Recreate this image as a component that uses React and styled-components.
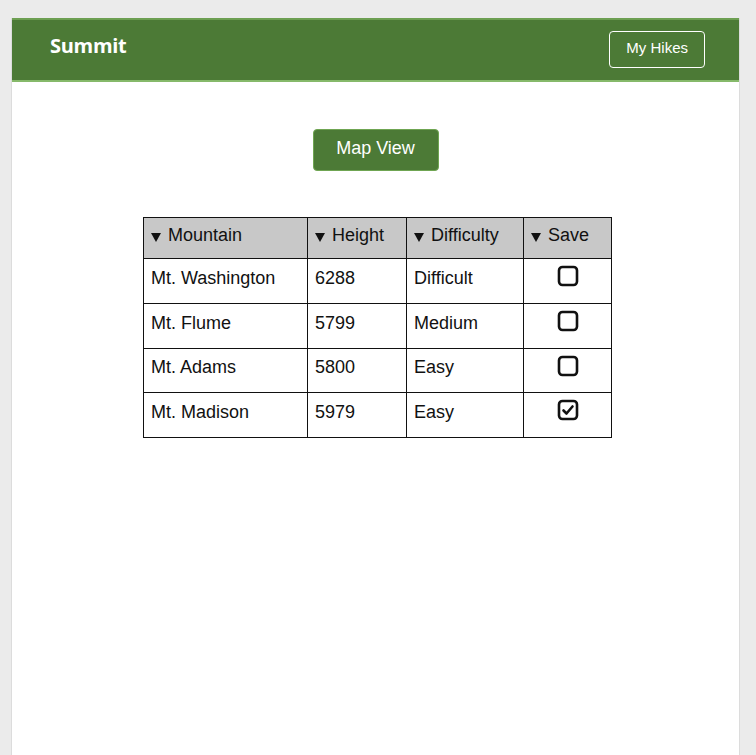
import React, { useState } from 'react';
import styled, { createGlobalStyle } from 'styled-components';

const GlobalStyle = createGlobalStyle`
  body {
    margin: 0;
    background: #ebebeb;
    font-family: "Liberation Sans", Arial, sans-serif;
  }
`;

const Page = styled.div`
  margin: 18px 16px 0 11px;
  min-height: 737px;
  background: #ffffff;
  border-left: 1px solid #dcdcdc;
  border-right: 1px solid #dcdcdc;
  box-sizing: border-box;
`;

const Header = styled.header`
  height: 64px;
  box-sizing: border-box;
  background: #4c7a36;
  border-top: 2px solid #6d9f52;
  border-bottom: 2px solid #86b96a;
  display: flex;
  align-items: center;
  justify-content: space-between;
  padding: 0 34px 0 38px;
`;

const Brand = styled.h1`
  margin: 0 0 9px;
  color: #ffffff;
  font-family: "Open Sans", sans-serif;
  font-weight: 700;
  font-size: 20px;
  letter-spacing: -0.3px;
`;

const OutlineButton = styled.button`
  height: 37px;
  margin-bottom: 2px;
  padding: 0 16px 3px;
  background: transparent;
  color: #ffffff;
  border: 1px solid #ffffff;
  border-radius: 4px;
  font-family: "Liberation Sans", Arial, sans-serif;
  font-size: 15px;
  cursor: pointer;
`;

const Content = styled.main`
  display: flex;
  flex-direction: column;
  align-items: center;
  padding-top: 47px;
  padding-left: 4px;
`;

const PrimaryButton = styled.button`
  width: 126px;
  height: 42px;
  margin-right: 4px;
  padding-bottom: 4px;
  background: #4c7a36;
  color: #ffffff;
  border: 1px solid #6fa552;
  border-radius: 4px;
  font-family: "Liberation Sans", Arial, sans-serif;
  font-size: 18px;
  cursor: pointer;
`;

const Table = styled.table`
  margin-top: 46px;
  border-collapse: collapse;
  border: 1px solid #111;
  font-size: 18px;
  color: #111;
`;

const Th = styled.th`
  width: ${(p) => p.$w}px;
  height: 41px;
  box-sizing: border-box;
  background: #c8c8c8;
  border: 1px solid #111;
  padding: 0 7px 5px;
  text-align: left;
  font-weight: 400;
  white-space: nowrap;
`;

const Arrow = styled.span`
  display: inline-block;
  width: 0;
  height: 0;
  border-left: 5px solid transparent;
  border-right: 5px solid transparent;
  border-top: 9px solid #111;
  margin-right: 7px;
  vertical-align: -1px;
`;

const Td = styled.td`
  height: 44.8px;
  box-sizing: border-box;
  border: 1px solid #111;
  padding: 0 7px 5px;
  text-align: ${(p) => (p.$center ? 'center' : 'left')};
  vertical-align: ${(p) => (p.$center ? 'top' : 'middle')};
`;

const Check = styled.button`
  margin-top: 6px;
  width: 22px;
  height: 22px;
  padding: 0;
  border: none;
  background: none;
  cursor: pointer;
  display: inline-flex;
`;

const hikes = [
  { name: 'Mt. Washington', height: 6288, difficulty: 'Difficult', saved: false },
  { name: 'Mt. Flume', height: 5799, difficulty: 'Medium', saved: false },
  { name: 'Mt. Adams', height: 5800, difficulty: 'Easy', saved: false },
  { name: 'Mt. Madison', height: 5979, difficulty: 'Easy', saved: true },
];

const columns = [
  { label: 'Mountain', w: 164 },
  { label: 'Height', w: 99 },
  { label: 'Difficulty', w: 117 },
  { label: 'Save', w: 88 },
];

function CheckIcon({ checked }) {
  return (
    <svg width="22" height="22" viewBox="0 0 22 22">
      <rect x="2" y="2" width="18" height="18" rx="3.5" fill="none" stroke="#111" strokeWidth="2.6" />
      {checked && (
        <path d="M6.5 11.5 L9.5 14.5 L15.5 7.5" fill="none" stroke="#111" strokeWidth="2.6" strokeLinecap="round" strokeLinejoin="round" />
      )}
    </svg>
  );
}

export default function App() {
  const [rows, setRows] = useState(hikes);
  const toggle = (i) =>
    setRows((r) => r.map((h, j) => (j === i ? { ...h, saved: !h.saved } : h)));

  return (
    <>
      <GlobalStyle />
      <Page>
        <Header>
          <Brand>Summit</Brand>
          <OutlineButton>My Hikes</OutlineButton>
        </Header>
        <Content>
          <PrimaryButton>Map View</PrimaryButton>
          <Table>
            <thead>
              <tr>
                {columns.map((c) => (
                  <Th key={c.label} $w={c.w}>
                    <Arrow />
                    {c.label}
                  </Th>
                ))}
              </tr>
            </thead>
            <tbody>
              {rows.map((h, i) => (
                <tr key={h.name}>
                  <Td>{h.name}</Td>
                  <Td>{h.height}</Td>
                  <Td>{h.difficulty}</Td>
                  <Td $center>
                    <Check onClick={() => toggle(i)}>
                      <CheckIcon checked={h.saved} />
                    </Check>
                  </Td>
                </tr>
              ))}
            </tbody>
          </Table>
        </Content>
      </Page>
    </>
  );
}
